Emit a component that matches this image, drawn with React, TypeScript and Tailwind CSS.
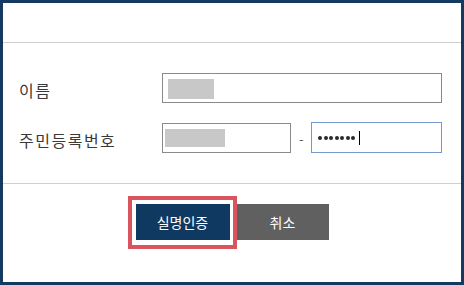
import React from "react";

export default function App() {
  return (
    <div
      className="w-[464px] h-[285px] border-[3px] border-[#153a62] bg-white flex flex-col"
      style={{ fontFamily: '"Noto Sans CJK KR", "Noto Sans", sans-serif' }}
    >
      <div className="h-[40px] shrink-0 border-b border-[#cfcfcf]" />
      <div className="h-[141px] shrink-0 border-b border-[#cfcfcf] pt-[30px] pl-[16px] pr-[19px] flex flex-col gap-[20px]">
        <div className="flex items-center h-[30px]">
          <div className="w-[143px] mt-[4px] text-[16px] leading-[20px] tracking-[1.5px] text-[#3a3a3a]">이름</div>
          <div className="w-[280px] h-[30px] border border-[#8a8a8a] pl-[5px] pt-[5px]">
            <div className="w-[46px] h-[20px] bg-[#c8c8c8]" />
          </div>
        </div>
        <div className="flex items-center h-[30px]">
          <div className="w-[143px] mt-[3px] text-[16px] leading-[20px] tracking-[1.5px] text-[#3a3a3a]">주민등록번호</div>
          <div className="w-[130px] h-[30px] border border-[#8a8a8a] pl-[2px] pt-[5px]">
            <div className="w-[60px] h-[18px] bg-[#c8c8c8]" />
          </div>
          <div className="w-[20px] text-center text-[13px] leading-[14px] text-[#555555] mt-[2px]">-</div>
          <div className="w-[131px] h-[31px] -mt-[1px] border border-[#7499cc] flex items-center pl-[6px]">
            <div className="flex items-center gap-[1.5px]">
              {[0, 1, 2, 3, 4, 5, 6].map((i) => (
                <span key={i} className="w-[4px] h-[4px] rounded-full bg-[#2a2a2a]" />
              ))}
            </div>
            <span className="ml-[4px] w-[1px] h-[14px] bg-black" />
          </div>
        </div>
      </div>
      <div className="flex-1 flex justify-center items-start pt-[20px] gap-[7px]">
        <div className="relative">
          <button className="w-[94px] h-[36px] bg-[#0f3961] text-white text-[14px] leading-[16px]">
            실명인증
          </button>
          <div className="absolute -left-[8px] -top-[8px] -right-[7px] -bottom-[9px] border-[4px] border-[#d9545c] pointer-events-none" />
        </div>
        <button className="w-[92px] h-[36px] bg-[#606060] text-white text-[14px] leading-[16px]">
          취소
        </button>
      </div>
    </div>
  );
}
